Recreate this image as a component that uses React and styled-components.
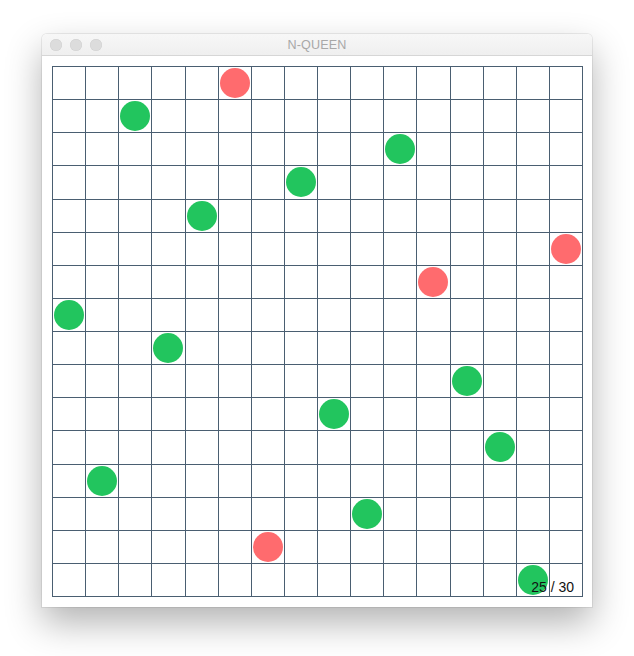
import React from "react";
import styled, { createGlobalStyle } from "styled-components";

const GlobalStyle = createGlobalStyle`
  html, body {
    margin: 0;
    padding: 0;
    background: #ffffff;
    font-family: "Liberation Sans", Arial, sans-serif;
  }
`;

const Page = styled.div`
  min-height: 656px;
  box-sizing: border-box;
  padding: 34px 0 50px 42px;
`;

const Window = styled.div`
  width: 550px;
  background: #fff;
  border-radius: 5px 5px 0 0;
  box-shadow: 0 0 0 1px rgba(0, 0, 0, 0.07), 0 16px 36px rgba(0, 0, 0, 0.3);
`;

const TitleBar = styled.div`
  position: relative;
  height: 21px;
  display: flex;
  align-items: center;
  padding: 0 8px;
  gap: 8px;
  background: linear-gradient(#f7f7f7, #efefef);
  border-bottom: 1px solid #d6d6d6;
  border-radius: 5px 5px 0 0;
`;

const Light = styled.span`
  width: 12px;
  height: 12px;
  border-radius: 50%;
  background: #dcdcdc;
  box-shadow: inset 0 0 0 0.5px #d0d0d0;
`;

const Title = styled.div`
  position: absolute;
  left: 0;
  right: 0;
  text-align: center;
  font-size: 12.6px;
  color: #a8a8a8;
  letter-spacing: 0.1px;
  pointer-events: none;
`;

const Content = styled.div`
  position: relative;
  padding: 10px;
`;

const Board = styled.div`
  display: grid;
  grid-template-columns: repeat(16, 1fr);
  grid-template-rows: repeat(16, 1fr);
  width: 531px;
  height: 531px;
  box-sizing: border-box;
  border-top: 1px solid #4a5e71;
  border-left: 1px solid #4a5e71;
`;

const Cell = styled.div`
  display: flex;
  align-items: center;
  justify-content: center;
  border-right: 1px solid #4a5e71;
  border-bottom: 1px solid #4a5e71;
`;

const Queen = styled.div`
  width: 30px;
  height: 30px;
  border-radius: 50%;
  background: ${(p) => (p.$clash ? "#ff6b6e" : "#22c55e")};
`;

const Counter = styled.div`
  position: absolute;
  right: 18px;
  bottom: 12px;
  font-size: 14px;
  line-height: 16px;
  color: #111;
`;

const N = 16;
// column of the queen in each row, and whether it is attacked
const queens = [
  [5, true],
  [2, false],
  [10, false],
  [7, false],
  [4, false],
  [15, true],
  [11, true],
  [0, false],
  [3, false],
  [12, false],
  [8, false],
  [13, false],
  [1, false],
  [9, false],
  [6, true],
  [14, false],
];

export default function App() {
  const cells = [];
  for (let r = 0; r < N; r++) {
    for (let c = 0; c < N; c++) {
      const [qc, clash] = queens[r];
      cells.push(
        <Cell key={r * N + c}>{qc === c && <Queen $clash={clash} />}</Cell>
      );
    }
  }

  return (
    <>
      <GlobalStyle />
      <Page>
        <Window>
          <TitleBar>
            <Light />
            <Light />
            <Light />
            <Title>N-QUEEN</Title>
          </TitleBar>
          <Content>
            <Board>{cells}</Board>
            <Counter>25 / 30</Counter>
          </Content>
        </Window>
      </Page>
    </>
  );
}
